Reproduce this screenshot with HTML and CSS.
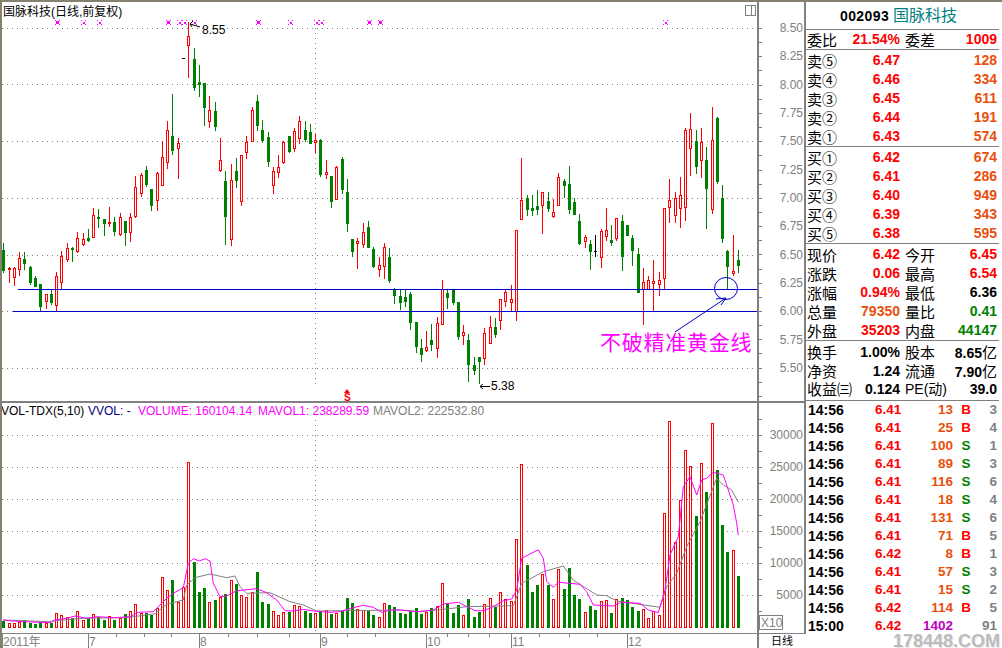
FILE: index.html
```html
<!DOCTYPE html>
<html lang="en">
<head>
  <meta charset="UTF-8" />
  <title>国脉科技 002093</title>
  <link rel="stylesheet" href="styles.css">
</head>
<body>
  <div class="terminal">
    <!-- candles and volume, filled in by chart.js -->
    <svg id="chart" class="chart" width="806" height="646" viewBox="0 2 806 646"></svg>

    <aside class="quote">
      <div class="stock-head"><b>002093</b> <span class="stock-name">国脉科技</span></div>

      <div class="sect ratio">
        <div class="row"><i>委比</i><b class="red">21.54%</b><i class="second">委差</i><b class="red">1009</b></div>
      </div>

      <div class="sect book">
        <div class="row"><i>卖⑤</i><b class="red">6.47</b><span></span><b class="orange">128</b></div>
        <div class="row"><i>卖④</i><b class="red">6.46</b><span></span><b class="orange">334</b></div>
        <div class="row"><i>卖③</i><b class="red">6.45</b><span></span><b class="orange">611</b></div>
        <div class="row"><i>卖②</i><b class="red">6.44</b><span></span><b class="orange">191</b></div>
        <div class="row"><i>卖①</i><b class="red">6.43</b><span></span><b class="orange">574</b></div>
      </div>

      <div class="sect book">
        <div class="row"><i>买①</i><b class="red">6.42</b><span></span><b class="orange">674</b></div>
        <div class="row"><i>买②</i><b class="red">6.41</b><span></span><b class="orange">286</b></div>
        <div class="row"><i>买③</i><b class="red">6.40</b><span></span><b class="orange">949</b></div>
        <div class="row"><i>买④</i><b class="red">6.39</b><span></span><b class="orange">343</b></div>
        <div class="row"><i>买⑤</i><b class="red">6.38</b><span></span><b class="orange">595</b></div>
      </div>

      <div class="sect book">
        <div class="row"><i>现价</i><b class="red">6.42</b><i class="second">今开</i><b class="red">6.45</b></div>
        <div class="row"><i>涨跌</i><b class="red">0.06</b><i class="second">最高</i><b class="red">6.54</b></div>
        <div class="row"><i>涨幅</i><b class="red">0.94%</b><i class="second">最低</i><b>6.36</b></div>
        <div class="row"><i>总量</i><b class="orange">79350</b><i class="second">量比</i><b class="green">0.41</b></div>
        <div class="row"><i>外盘</i><b class="red">35203</b><i class="second">内盘</i><b class="green">44147</b></div>
      </div>

      <div class="sect stats">
        <div class="row"><i>换手</i><b>1.00%</b><i class="second">股本</i><b>8.65<em>亿</em></b></div>
        <div class="row"><i>净资</i><b>1.24</b><i class="second">流通</i><b>7.90<em>亿</em></b></div>
        <div class="row"><i>收益㈢</i><b>0.124</b><i class="second pe">PE(动)</i><b>39.0</b></div>
      </div>

      <div class="ticks">
        <div class="tick"><b>14:56</b><span class="red">6.41</span><span class="orange">13</span><span class="red">B</span><span class="count">3</span></div>
        <div class="tick"><b>14:56</b><span class="red">6.41</span><span class="orange">25</span><span class="red">B</span><span class="count">4</span></div>
        <div class="tick"><b>14:56</b><span class="red">6.41</span><span class="orange">100</span><span class="green">S</span><span class="count">1</span></div>
        <div class="tick"><b>14:56</b><span class="red">6.41</span><span class="orange">89</span><span class="green">S</span><span class="count">3</span></div>
        <div class="tick"><b>14:56</b><span class="red">6.41</span><span class="orange">116</span><span class="green">S</span><span class="count">6</span></div>
        <div class="tick"><b>14:56</b><span class="red">6.41</span><span class="orange">18</span><span class="green">S</span><span class="count">4</span></div>
        <div class="tick"><b>14:56</b><span class="red">6.41</span><span class="orange">131</span><span class="green">S</span><span class="count">6</span></div>
        <div class="tick"><b>14:56</b><span class="red">6.41</span><span class="orange">71</span><span class="red">B</span><span class="count">5</span></div>
        <div class="tick"><b>14:56</b><span class="red">6.42</span><span class="orange">8</span><span class="red">B</span><span class="count">1</span></div>
        <div class="tick"><b>14:56</b><span class="red">6.41</span><span class="orange">57</span><span class="green">S</span><span class="count">3</span></div>
        <div class="tick"><b>14:56</b><span class="red">6.41</span><span class="orange">15</span><span class="green">S</span><span class="count">2</span></div>
        <div class="tick"><b>14:56</b><span class="red">6.42</span><span class="orange">114</span><span class="red">B</span><span class="count">5</span></div>
        <div class="tick"><b>15:00</b><span class="red">6.42</span><span class="purple">1402</span><span></span><span class="count">91</span></div>
      </div>

      <div class="watermark">178448.COM</div>
    </aside>
  </div>

  <script src="chart.js"></script>
</body>
</html>
```

FILE: styles.css
```css
* {
  box-sizing: border-box;
}

body {
  margin: 0;
  background-color: #ffffff;
  overflow: hidden;
}

.terminal {
  display: flex;
  width: 1002px;
  height: 648px;
  border-top: 2px solid #85806f;
  font-family: "Liberation Sans", "Noto Sans CJK SC", sans-serif;
}

.chart {
  display: block;
  flex: none;
}

/* chart text */
.label {
  font: 12px "Liberation Sans", "Noto Sans CJK SC", sans-serif;
  fill: #808080;
}

.label-end {
  text-anchor: end;
}

.title {
  fill: #000000;
}

.price-note {
  fill: #000000;
}

.navy {
  fill: #000080;
}

.pink {
  fill: #ff00ff;
}

.slogan {
  font: 21px "Noto Sans CJK SC", sans-serif;
  letter-spacing: 0.75px;
  fill: #ff00ff;
}

.signal {
  font: bold 10px "Liberation Sans", sans-serif;
  fill: #ff0000;
}

.cycle {
  font: 11px "Noto Sans CJK SC", sans-serif;
  fill: #000000;
}

/* right hand quote panel */
.quote {
  position: relative;
  flex: 1;
  font-size: 14px;
  line-height: 19px;
}

.quote i,
.quote em {
  font: normal 15px/19px "Noto Sans CJK SC", sans-serif;
  white-space: nowrap;
}

.stock-head {
  height: 28px;
  padding-right: 8px;
  border-bottom: 1px solid #808080;
  text-align: center;
  line-height: 27px;
  width: 193px;
}

.stock-head b {
  letter-spacing: 0.4px;
}

.stock-name {
  font: 16px "Noto Sans CJK SC", sans-serif;
  color: #008080;
}

.sect {
  width: 193px;
  padding-top: 1px;
  border-bottom: 1px solid #808080;
}

.ratio {
  padding-top: 0;
  height: 20px;
}

.book {
  height: 97px;
}

.stats {
  height: 60px;
  padding-top: 2px;
}

.stats .row {
  height: 18.5px;
  line-height: 18px;
}

.stats i,
.stats em {
  line-height: 18px;
}

.row {
  display: grid;
  grid-template-columns: 31px 62px 35px 62px;
  height: 19px;
  padding-left: 1px;
  white-space: nowrap;
}

.row b {
  text-align: right;
}

.row .second {
  padding-left: 5px;
}

.row .pe {
  font-family: "Liberation Sans", "Noto Sans CJK SC", sans-serif;
  font-size: 14px;
}

.ticks {
  padding-left: 2px;
}

.tick {
  display: grid;
  grid-template-columns: 67px 40px 38px 26px 18px;
  height: 18px;
  line-height: 18px;
}

.tick span {
  font-size: 13.5px;
  font-weight: bold;
}

.tick span:nth-child(3) {
  text-align: right;
}

.tick span:nth-child(4) {
  text-align: center;
}

.tick span:last-child {
  text-align: right;
}

.red { color: #ff0000; }
.green { color: #008000; }
.orange { color: #e8500c; }
.purple { color: #c000c0; }
.count { color: #808080; }

.watermark {
  position: absolute;
  right: 2px;
  bottom: 0;
  font: bold 18px/14px "Liberation Sans", sans-serif;
  color: #bcbcbc;
  text-shadow: 1px 1px 0 #e8e8e8;
}
```

FILE: chart.js
```javascript
const svg = document.getElementById("chart");
const GREEN = "#008000";
const RED = "#ff0000";
const GRID = "#808080";
const BLUE = "#0000cc";

// colour, high, body top, body bottom, low (all in screen pixels)
const candles = [
  "g 243 250 270 272", "r 267 268 269 282", "r 267 268 277 285", "r 252 258 269 275", "g 252 259 263 269",
  "g 266 267 282 284", "g 276 278 286 286", "g 284 284 306 310", "r 294 294 301 308", "g 289 294 302 304",
  "r 272 276 305 311", "r 251 256 282 288", "r 243 248 259 261", "g 247 248 249 261", "r 232 238 251 252",
  "r 233 239 244 245", "g 229 238 240 241", "r 208 215 237 237", "g 209 217 218 227", "g 219 219 223 235",
  "r 207 222 223 226", "g 217 222 231 235", "r 213 217 234 235", "g 221 221 232 245", "r 213 217 232 241",
  "r 176 187 216 217", "r 173 175 193 196", "g 166 170 184 186", "g 189 189 205 210", "r 172 173 200 210",
  "r 141 157 185 185", "r 121 130 162 168", "g 94 136 150 154", "r 138 143 148 178", "k 58 58 58 58",
  "r 22 36 45 77", "g 48 59 87 90", "g 65 82 84 96", "g 83 83 107 125", "r 96 110 121 127",
  "g 102 111 126 130", "r 138 160 170 171", "g 171 181 216 244", "r 164 180 239 245", "g 158 171 180 187",
  "r 155 155 201 205", "r 136 142 152 158", "r 107 110 141 141", "g 95 101 125 130", "g 120 130 140 142",
  "g 132 137 161 166", "r 167 171 185 193", "r 155 167 172 177", "r 141 142 162 163", "g 136 136 151 152",
  "r 128 131 148 151", "r 116 121 138 143", "g 121 130 139 141", "g 124 132 143 143", "r 134 140 142 152",
  "g 139 140 174 176", "r 160 172 174 178", "g 176 176 201 207", "r 166 167 199 199", "g 157 159 189 193",
  "g 179 192 223 231", "g 239 239 251 256", "r 238 241 243 268", "r 223 232 244 247", "g 221 227 247 247",
  "g 247 249 266 267", "r 257 265 269 276", "r 243 247 266 278", "g 248 257 280 282", "g 288 289 295 303",
  "g 289 296 302 309", "g 289 297 301 306", "g 292 294 322 329", "g 322 322 346 352", "g 339 348 354 361",
  "r 331 347 350 351", "g 324 340 344 350", "r 317 323 348 357", "r 280 289 324 324", "g 290 293 297 308",
  "g 289 290 302 304", "g 302 302 336 339", "r 325 332 335 344", "g 334 340 364 381", "g 357 365 370 374",
  "g 357 357 361 383", "r 328 333 358 364", "r 316 327 343 343", "g 318 327 334 337", "r 299 299 320 329",
  "r 290 292 301 306", "r 285 299 302 311", "r 230 230 311 320", "r 158 200 219 219", "g 195 198 209 215",
  "g 195 208 210 215", "g 190 206 209 214", "r 192 192 205 233", "g 192 201 208 211", "r 199 212 216 217",
  "r 173 177 205 205", "g 179 181 185 197", "g 166 184 209 213", "g 198 202 214 214", "g 214 221 243 244",
  "r 235 237 241 247", "g 240 244 251 269", "k 235 251 252 256", "r 229 231 257 267", "r 208 230 236 240",
  "g 225 240 242 245", "r 218 218 238 240", "g 215 221 256 270", "g 225 225 235 235", "g 235 238 250 265",
  "g 248 254 292 292", "r 268 282 289 324", "r 276 280 289 289", "r 260 281 283 310", "r 272 280 284 295",
  "r 208 208 278 289", "r 179 200 207 222", "r 192 198 215 222", "r 177 195 208 227", "r 128 130 207 220",
  "r 113 129 148 175", "g 130 141 166 173", "r 128 142 160 177", "g 147 160 188 228", "r 107 140 209 213",
  "g 117 118 181 183", "g 185 198 238 242", "g 250 251 266 289", "r 235 271 273 275", "g 250 260 265 272"
].map(row => row.split(" "));

// volume bars: colour + top in 3x zoom units above the panel top of 400
const volumes = ("g663 r669 r669 r665 g660 g668 g672 g665 r668 g668 r640 r646 r652 g655 r634 r660 g655 r643 g652 g660 " +
  "r648 g660 r655 g642 r634 r613 r640 g640 g645 r625 r532 r571 g540 r605 r562 r187 g486 g577 g565 r607 " +
  "g600 r590 g582 r541 g552 r585 r592 r575 g517 g606 g612 r634 r646 r637 g635 r616 r619 g633 g640 r640 " +
  "g635 r631 g642 r638 g632 g595 g609 r628 r629 g633 g645 r652 r610 g615 g620 g640 g642 g634 g624 g642 " +
  "r637 g624 r618 r550 g612 g638 g615 r645 g597 g651 g636 r612 r595 g620 r577 r598 r604 r418 r193 g495 " +
  "g576 g555 r522 g555 r598 r508 g567 g505 g585 g597 r637 g618 g630 r604 r601 g639 r598 g594 g601 g620 " +
  "g633 r628 r655 r634 r645 r340 r63 r427 r300 r151 r199 g349 r190 g276 r70 g211 g375 g456 r451 g528").split(" ");

const maFast = [[10,660],[25,662],[70,665],[150,668],[165,660],[200,655],[225,648],[260,655],[290,650],[340,653],
  [390,650],[415,637],[460,635],[500,595],[520,580],[550,563],[565,490],[580,476],[598,483],[615,476],[630,483],
  [640,550],[660,590],[680,588],[710,572],[770,566],[800,578],[830,600],[855,632],[880,633],[910,628],[940,633],
  [990,637],[1020,635],[1060,623],[1090,616],[1120,622],[1145,637],[1170,630],[1200,630],[1250,635],[1300,630],
  [1330,612],[1375,607],[1425,632],[1450,632],[1480,620],[1510,602],[1535,597],[1550,570],[1565,475],[1615,449],
  [1630,475],[1640,545],[1660,562],[1675,547],[1740,553],[1760,575],[1780,615],[1840,618],[1865,607],[1920,610],
  [1945,630],[1975,638],[1995,570],[2010,465],[2035,410],[2050,260],[2070,230],[2090,285],[2105,240],[2120,235],
  [2140,217],[2170,225],[2200,315],[2210,370],[2215,405]];

const maSlow = [[10,660],[150,665],[165,662],[250,655],[380,653],[465,641],[500,613],[550,600],[560,555],[585,533],
  [630,522],[680,533],[705,528],[720,560],[740,580],[810,578],[870,605],[910,615],[950,633],[1200,630],[1260,635],
  [1310,630],[1400,620],[1540,617],[1565,550],[1630,515],[1690,498],[1720,540],[1790,585],[1820,587],[1850,603],
  [1980,622],[2000,560],[2030,520],[2060,440],[2100,365],[2150,235],[2170,255],[2195,270],[2215,307]];

const markX = [57, 83, 99, 168, 179, 184, 194, 258, 290, 316, 321, 369, 380, 665];
const bigMarks = [57, 168, 258, 369, 380];

let out = "";

function rect(x, y, w, h, fill) {
  out += `<rect x="${x}" y="${y}" width="${w}" height="${h}" fill="${fill}" shape-rendering="crispEdges"/>`;
}

function line(x1, y1, x2, y2, color) {
  out += `<line x1="${x1}" y1="${y1}" x2="${x2}" y2="${y2}" stroke="${color}" shape-rendering="crispEdges"/>`;
}

function dots(x1, y1, x2, y2) {
  out += `<line x1="${x1}" y1="${y1}" x2="${x2}" y2="${y2}" stroke="${GRID}" stroke-dasharray="1 4" shape-rendering="crispEdges"/>`;
}

function text(x, y, str, cls) {
  out += `<text x="${x}" y="${y}" class="${cls}">${str}</text>`;
}

function bar(left, top, bottom, color) {
  if (color === RED && bottom - top > 2) {
    out += `<rect x="${left + 0.5}" y="${top + 0.5}" width="2" height="${bottom - top - 1}" fill="#ffffff" stroke="${RED}" shape-rendering="crispEdges"/>`;
  } else {
    rect(left, top, 3, bottom - top, color);
  }
}

function slotX(i) {
  return Math.round(3.3 + 5.286 * i);
}

// grid
[28, 84, 141, 198, 255, 311, 368].forEach(y => dots(2, y + 0.5, 757, y + 0.5));
dots(315.5, 28, 315.5, 388);
[435, 467, 499, 531, 563, 595].forEach(y => dots(2, y + 0.5, 757, y + 0.5));
dots(315.5, 420, 315.5, 632);

// candles
candles.forEach((c, i) => {
  const x = slotX(i);
  const color = c[0] === "g" ? GREEN : c[0] === "r" ? RED : "#000000";
  rect(x, +c[1], 1, c[4] - c[1] + 1, color);
  if (c[0] === "k") {
    rect(x - 1, +c[2], 3, 1, color);
  } else {
    bar(x - 1, +c[2], +c[3] + 1, color);
  }
});

// volume bars
volumes.forEach((v, i) => {
  const top = 400 + Math.round(+v.slice(1) / 3);
  bar(slotX(i) - 1, top, 628, v[0] === "g" ? GREEN : RED);
});

function maLine(points, color) {
  const pts = points.map(p => `${(p[0] / 3).toFixed(1)},${(400 + p[1] / 3).toFixed(1)}`).join(" ");
  out += `<polyline points="${pts}" fill="none" stroke="${color}"/>`;
}
maLine(maSlow, GRID);
maLine(maFast, "#ff00ff");

// top markers
markX.forEach(x => {
  const big = bigMarks.includes(x);
  rect(x - (big ? 1 : 0), big ? 21 : 22, big ? 3 : 2, big ? 3 : 2, "#ff00ff");
  [-2, 2].forEach(dx => [20, 24].forEach(y => rect(x + dx, y, 1, 1, "#ff00ff")));
});

// gold lines, circle and arrow
line(18, 289.5, 758, 289.5, BLUE);
line(13, 311.5, 758, 311.5, BLUE);
out += `<ellipse cx="726" cy="288.5" rx="11.5" ry="11" fill="none" stroke="${BLUE}"/>`;
out += `<path d="M675 332 L726 298 M726 298 L716 299 M726 298 L721 305" fill="none" stroke="${BLUE}"/>`;
text(600, 350, "不破精准黄金线", "slogan");

// price notes
out += `<path d="M200 27 L190 24 M190 24 L193 21 M190 24 L192 27" fill="none" stroke="#000000"/>`;
text(202, 34, "8.55", "label price-note");
out += `<path d="M490 386.5 L480 386.5 M480 386.5 L483 384 M480 386.5 L483 389" fill="none" stroke="#000000"/>`;
text(491, 390, "5.38", "label price-note");
out += `<polygon points="347,389 344,393 350,393" fill="${RED}"/>`;
text(344, 401, "S", "signal");

// titles
text(3, 16, "国脉科技(日线,前复权)", "label title");
text(1, 415, "VOL-TDX(5,10)", "label title");
text(88, 415, "VVOL: -", "label navy");
text(138, 415, "VOLUME: 160104.14", "label pink");
text(258, 415, "MAVOL1: 238289.59", "label pink");
text(373, 415, "MAVOL2: 222532.80", "label");

// price axis
for (let k = 0; k <= 26; k++) {
  rect(759, Math.round(28 + 14.15 * k), 3, 1, GRID);
}
["8.50", "8.25", "8.00", "7.75", "7.50", "7.25", "7.00", "6.75", "6.50", "6.25", "6.00", "5.75", "5.50"].forEach((s, k) => {
  text(803, Math.round(28 + 28.33 * k) + 4, s, "label label-end");
});

// volume axis
for (let k = -1; k <= 12; k++) {
  rect(759, 435 + 16 * k, 3, 1, GRID);
}
["30000", "25000", "20000", "15000", "10000", "5000"].forEach((s, k) => {
  text(803, 435 + 32 * k + 4, s, "label label-end");
});

// time axis
[2, 88, 199, 320, 426, 511, 627].forEach(x => rect(x, 633, 1, 15, GRID));
[116, 144, 171, 228, 257, 289, 347, 375, 447, 468, 489, 539, 569, 597].forEach(x => rect(x, 634, 1, 3, GRID));
[[3, "2011年"], [89, "7"], [200, "8"], [321, "9"], [427, "10"], [512, "11"], [628, "12"]].forEach(t => {
  text(t[0], 646, t[1], "label");
});
text(771, 645, "日线", "cycle");
out += `<rect x="759.5" y="615.5" width="23" height="14" fill="#ffffff" stroke="${GRID}" shape-rendering="crispEdges"/>`;
text(761, 627, "X10", "label");

// frame
rect(0, 2, 2, 646, "#85806f");
rect(0, 401, 806, 2, GRID);
rect(2, 633, 804, 1, GRID);
rect(757, 2, 2, 646, GRID);
rect(804, 2, 2, 631, GRID);
out += `<rect x="745.5" y="5.5" width="10" height="10" fill="none" stroke="${GRID}" shape-rendering="crispEdges"/>`;
line(751.5, 5, 751.5, 16, GRID);

svg.innerHTML = out;
```
